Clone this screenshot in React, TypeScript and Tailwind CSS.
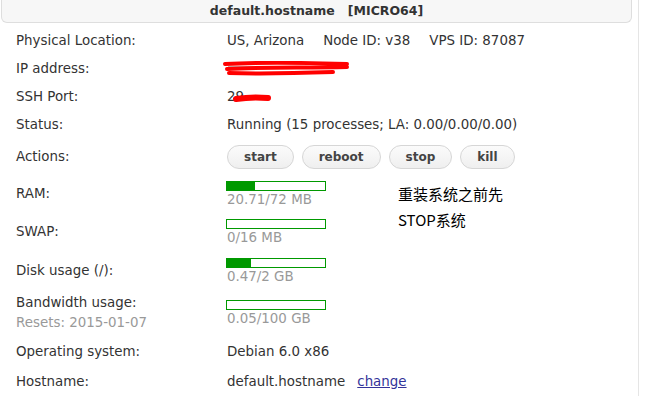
const font = { fontFamily: '"DejaVu Sans", Verdana, sans-serif' };

function Bar({ pct }: { pct: number }) {
  return (
    <div className="-ml-[1px] h-[10px] w-[100px] border border-[#009900] bg-white">
      <div className="h-full bg-[#009900]" style={{ width: `${pct}%` }} />
    </div>
  );
}

function Usage({ pct, text }: { pct: number; text: string }) {
  return (
    <div className="flex flex-col gap-[1px] pt-[1px]">
      <Bar pct={pct} />
      <div className="leading-[16px] text-[#999]">{text}</div>
    </div>
  );
}

function Row({ label, sub, h, children }: { label: string; sub?: string; h: string; children?: React.ReactNode }) {
  return (
    <div className={`flex items-center ${h}`}>
      <div className="w-[227px] shrink-0 pl-4 leading-[20px]">
        <div>{label}</div>
        {sub && <div className="text-[#999]">{sub}</div>}
      </div>
      <div className="flex-1 whitespace-nowrap">{children}</div>
    </div>
  );
}

function Btn({ children }: { children: React.ReactNode }) {
  return (
    <button className="h-[24px] rounded-full border border-[#d6d6d6] bg-gradient-to-b from-[#fbfbfb] to-[#efefef] px-[16px] text-[12px] font-bold text-[#444]">
      {children}
    </button>
  );
}

export default function App() {
  return (
    <div className="relative h-[396px] w-[648px] overflow-hidden bg-white text-[13.4px] text-[#333]" style={font}>
      <div className="absolute left-[638px] top-0 h-full border-l border-[#e5e5e5]" />
      <div className="ml-[1px] flex h-[23px] w-[631px] items-center justify-center rounded-b-[6px] border border-t-0 border-[#dedede] bg-[#f7f7f7] text-[12.5px] font-bold text-[#333]">
        default.hostname&nbsp;&nbsp;&nbsp;[MICRO64]
      </div>
      <div className="pt-[4px]">
        <Row label="Physical Location:" h="h-[28px]">
          <span>US, Arizona</span>
          <span className="ml-[19px]">Node ID: v38</span>
          <span className="ml-[19px]">VPS ID: 87087</span>
        </Row>
        <Row label="IP address:" h="h-[28px]">
          <svg width="130" height="16" viewBox="0 0 130 16" className="-ml-[4px]">
            <path d="M5 6 H34 M62 6 H82" stroke="#777" strokeWidth="1" />
            <path d="M2 3 C40 1 90 2 124 3 M4 8 C40 6 80 7 124 6 M6 12 C40 13 80 12 110 11" stroke="#ff0000" strokeWidth="4" strokeLinecap="round" fill="none" />
          </svg>
        </Row>
        <Row label="SSH Port:" h="h-[28px]">
          <span className="relative">
            29
            <svg width="40" height="10" viewBox="0 0 40 10" className="absolute left-[6px] top-[5px]">
              <path d="M3 5 C15 3 25 3 35 4" stroke="#ff0000" strokeWidth="6" strokeLinecap="round" fill="none" />
            </svg>
          </span>
        </Row>
        <Row label="Status:" h="h-[28px]">
          Running (15 processes; LA: 0.00/0.00/0.00)
        </Row>
        <Row label="Actions:" h="h-[36px]">
          <div className="flex gap-[8px]">
            <Btn>start</Btn>
            <Btn>reboot</Btn>
            <Btn>stop</Btn>
            <Btn>kill</Btn>
          </div>
        </Row>
        <Row label="RAM:" h="h-[38px]">
          <Usage pct={29} text="20.71/72 MB" />
        </Row>
        <Row label="SWAP:" h="h-[38px]">
          <Usage pct={0} text="0/16 MB" />
        </Row>
        <Row label="Disk usage (/):" h="h-[39px]">
          <Usage pct={24} text="0.47/2 GB" />
        </Row>
        <Row label="Bandwidth usage:" sub="Resets: 2015-01-07" h="h-[45px]">
          <Usage pct={0} text="0.05/100 GB" />
        </Row>
        <Row label="Operating system:" h="h-[34px]">
          Debian 6.0 x86
        </Row>
        <Row label="Hostname:" h="h-[26px]">
          <span>default.hostname</span>
          <a className="ml-[12px] text-[#333399] underline">change</a>
        </Row>
      </div>
      <div
        className="absolute left-[398px] top-[181px] text-[15px] leading-[26px] text-black"
        style={{ fontFamily: '"Noto Sans CJK SC", sans-serif' }}
      >
        <div>重装系统之前先</div>
        <div>STOP系统</div>
      </div>
    </div>
  );
}
